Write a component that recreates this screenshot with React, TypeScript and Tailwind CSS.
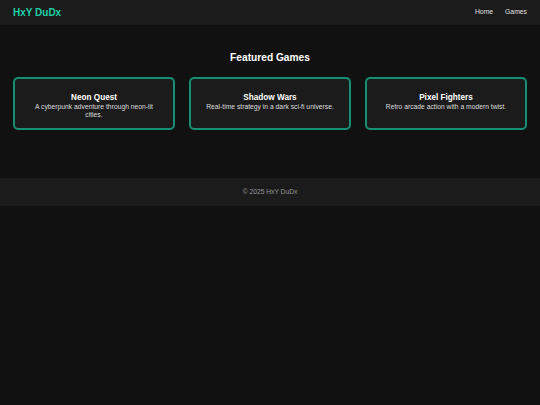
import React from "react";

const games = [
  { title: "Neon Quest", desc: "A cyberpunk adventure through neon-lit cities." },
  { title: "Shadow Wars", desc: "Real-time strategy in a dark sci-fi universe." },
  { title: "Pixel Fighters", desc: "Retro arcade action with a modern twist." },
];

export default function App() {
  return (
    <div className="min-h-[405px] bg-[#111111] font-['Liberation_Sans',Arial,sans-serif] text-white">
      <header className="flex h-[25px] items-center justify-between bg-[#1b1b1b] px-[13px]">
        <div className="text-[10px] font-bold text-[#1fd1a5]">HxY DuDx</div>
        <nav className="flex gap-[12px] text-[6.8px] text-[#e0e0e0]">
          <a>Home</a>
          <a>Games</a>
        </nav>
      </header>
      <main className="px-[13px] pb-[48px] pt-[26px]">
        <h2 className="mb-[12px] text-center text-[10.2px] font-bold leading-[14px]">Featured Games</h2>
        <div className="grid grid-cols-3 gap-[14px]">
          {games.map((g) => (
            <div
              key={g.title}
              className="h-[53px] rounded-[5px] border-2 border-[#178f74] bg-[#1b1b1b] px-[12px] pt-[13px] text-center"
            >
              <div className="text-[8.2px] font-bold leading-[11px]">{g.title}</div>
              <div className="text-[6.75px] leading-[8px] text-[#dddddd]">{g.desc}</div>
            </div>
          ))}
        </div>
      </main>
      <footer className="flex h-[28px] items-center justify-center bg-[#1b1b1b] text-[6.7px] text-[#9a9a9a]">
        © 2025 HxY DuDx
      </footer>
    </div>
  );
}
